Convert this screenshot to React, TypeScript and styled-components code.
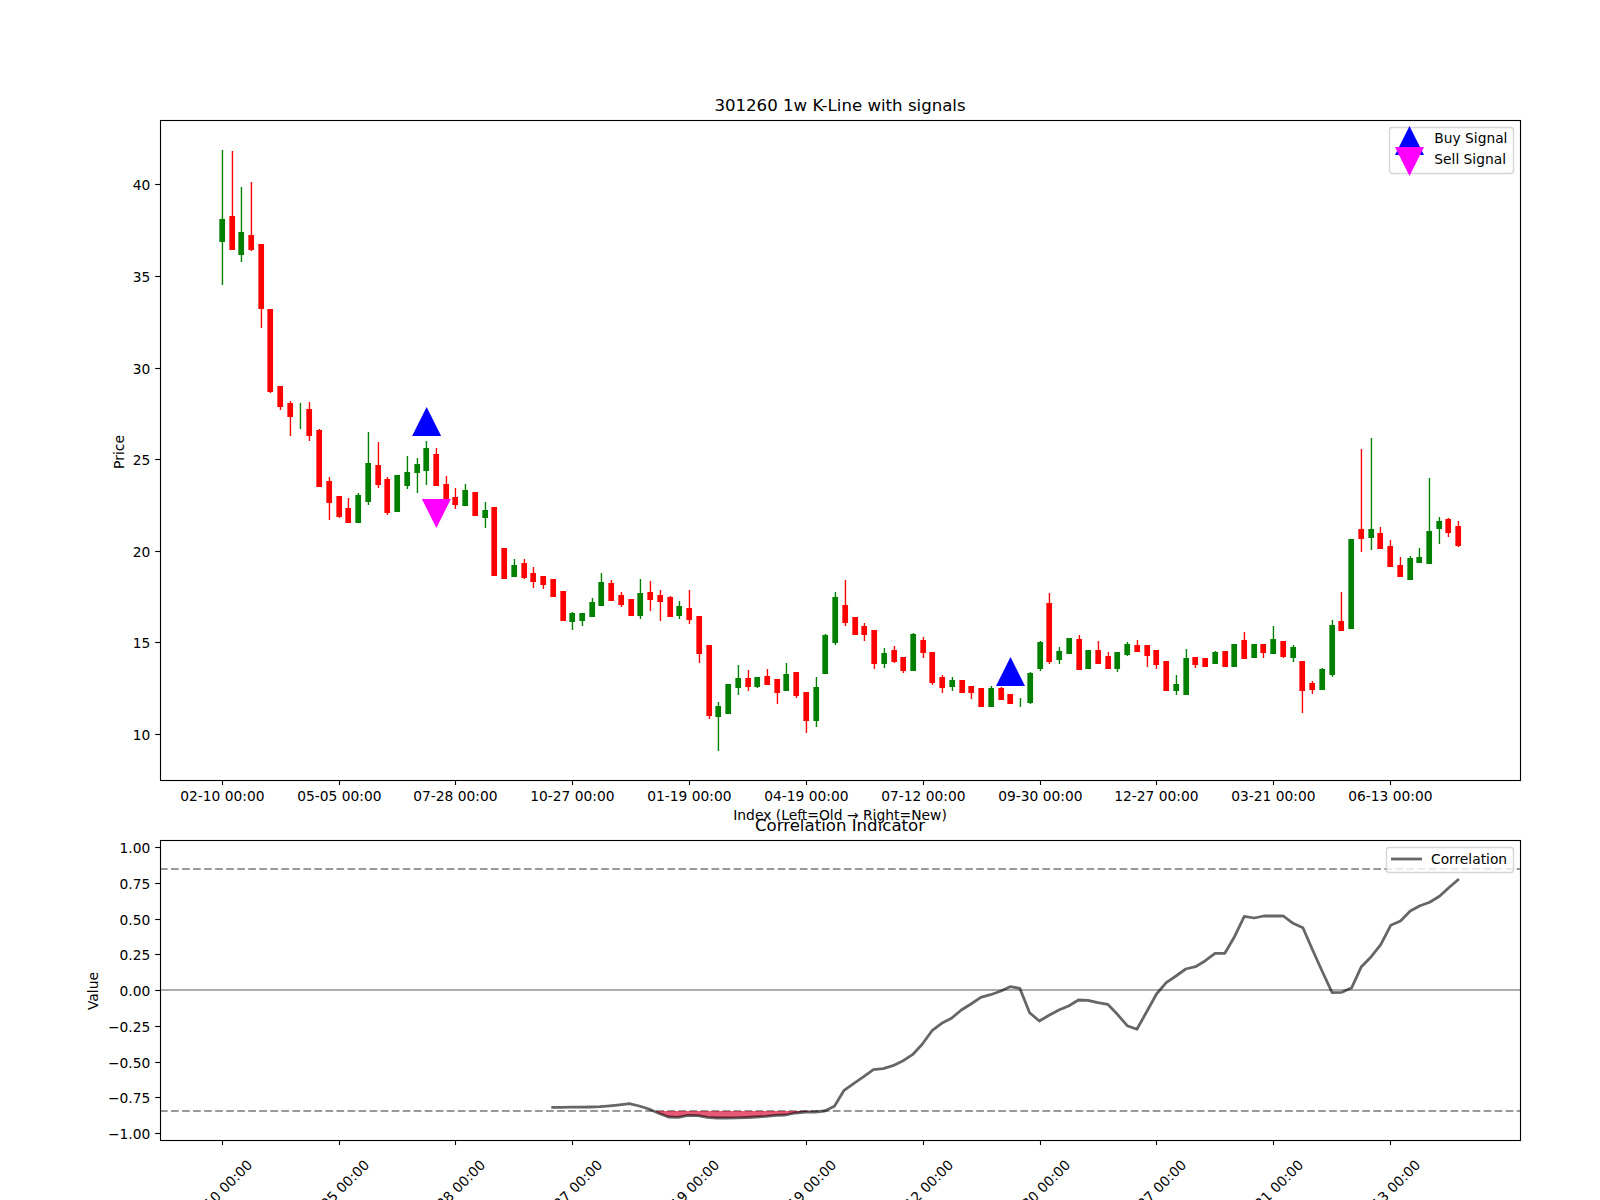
import React from "react";
import styled, { createGlobalStyle } from "styled-components";

const Global = createGlobalStyle`
  html, body { margin: 0; padding: 0; background: #fff; overflow: hidden; }
`;

const Page = styled.main`
  width: 1600px;
  height: 1200px;
  overflow: hidden;
  display: flex;
  flex-direction: column;
  background: #fff;
  font-family: "DejaVu Sans", sans-serif;
  color: #000;
`;

const Panel = styled.section<{ $top: number }>`
  display: flex;
  flex-direction: column;
  padding-top: ${(p) => p.$top}px;
`;

const ChartTitle = styled.h2`
  margin: 0;
  width: 1680px;
  text-align: center;
  font-size: 16.6px;
  line-height: 20px;
  font-weight: 400;
  white-space: nowrap;
`;

const Plot = styled.svg`
  display: block;
  overflow: visible;
  flex: none;
`;

const Spine = styled.rect`
  fill: none;
  stroke: #000;
  stroke-width: 1.11;
`;
const Tick = styled.line`
  stroke: #000;
  stroke-width: 1.11;
`;
const TickLabel = styled.text<{ $anchor: string }>`
  font-family: "DejaVu Sans", sans-serif;
  font-size: 13.8px;
  fill: #000;
  text-anchor: ${(p) => p.$anchor};
`;
const AxisLabel = styled.text`
  font-family: "DejaVu Sans", sans-serif;
  font-size: 13.89px;
  fill: #000;
  text-anchor: middle;
`;
const Wick = styled.line<{ $color: string }>`
  stroke: ${(p) => p.$color};
  stroke-width: 1.39;
`;
const Body = styled.rect<{ $color: string }>`
  fill: ${(p) => p.$color};
`;
const Marker = styled.polygon<{ $color: string }>`
  fill: ${(p) => p.$color};
`;
const LegendBox = styled.rect`
  fill: #fff;
  fill-opacity: 0.8;
  stroke: #ccc;
  stroke-opacity: 0.8;
  stroke-width: 1.39;
`;
const ThresholdLine = styled.line`
  stroke: #808080;
  stroke-opacity: 0.8;
  stroke-width: 2.08;
  stroke-dasharray: 7.7 3.33;
`;
const ZeroLine = styled.line`
  stroke: #808080;
  stroke-opacity: 0.65;
  stroke-width: 2.08;
`;
const CorrelationLine = styled.polyline`
  fill: none;
  stroke: #000;
  stroke-opacity: 0.6;
  stroke-width: 2.78;
  stroke-linejoin: round;
`;
const LegendSwatch = styled.line`
  stroke: #000;
  stroke-opacity: 0.6;
  stroke-width: 2.78;
`;
const OversoldFill = styled.polygon`
  fill: #dc143c;
  fill-opacity: 0.7;
`;

type C = [number, "g" | "r", number, number, number, number];
// x pixel, colour, wick top, body top, body bottom, wick bottom
const candles: C[] = [
  [222,"g",150,219,242,285],[232,"r",151,216,250,250],[241,"g",187,232,255,262],[251,"r",182,235,250,251],
  [261,"r",244,244,309,328],[270,"r",309,309,392,393],[280,"r",386,386,407,410],[290,"r",401,403,417,436],
  [300,"g",403,416,416,429],[309,"r",402,409,436,441],[319,"r",429,430,487,487],[329,"r",477,481,503,520],
  [339,"r",496,496,517,518],[348,"r",498,508,523,523],[358,"g",493,495,523,523],[368,"g",432,463,502,505],
  [378,"r",442,465,485,488],[387,"r",477,479,513,515],[397,"g",475,475,512,512],[407,"g",456,472,486,489],
  [417,"g",458,464,473,493],[426,"g",441,448,471,485],[436,"r",448,454,486,486],[446,"r",476,484,501,502],
  [455,"r",488,497,505,509],[465,"g",484,490,506,506],[475,"r",492,492,516,516],[485,"g",502,510,518,528],
  [494,"r",507,507,576,576],[504,"r",548,548,579,579],[514,"g",559,565,577,577],[524,"r",559,563,578,579],
  [533,"r",567,573,582,588],[543,"r",576,576,585,589],[553,"r",579,579,597,597],[563,"r",591,591,621,621],
  [572,"g",612,613,622,630],[582,"g",613,613,621,626],[592,"g",598,602,617,617],[601,"g",573,582,606,606],
  [611,"r",580,583,601,601],[621,"r",592,595,605,607],[631,"r",599,599,616,616],[640,"g",579,593,616,619],
  [650,"r",581,592,600,611],[660,"r",590,595,602,621],[670,"r",596,597,617,617],[679,"g",601,606,616,619],
  [689,"r",590,608,620,624],[699,"r",616,616,654,663],[709,"r",645,645,716,719],[718,"g",702,706,717,751],
  [728,"g",684,684,714,714],[738,"g",665,678,688,695],[748,"r",670,678,687,691],[757,"g",677,677,687,688],
  [767,"r",669,676,685,685],[777,"r",679,679,693,704],[786,"g",663,674,691,691],[796,"r",672,672,696,698],
  [806,"r",692,692,721,733],[816,"g",677,687,721,727],[825,"g",634,635,674,674],[835,"g",592,597,643,645],
  [845,"r",580,605,623,626],[855,"r",617,617,635,635],[864,"r",623,626,635,641],[874,"r",630,630,664,669],
  [884,"g",648,653,664,668],[894,"r",646,650,662,663],[903,"r",657,657,671,673],[913,"g",633,634,671,671],
  [923,"r",637,640,653,658],[932,"r",652,652,683,685],[942,"r",675,677,688,693],[952,"g",677,680,687,691],
  [962,"r",680,680,693,693],[971,"r",686,686,693,699],[981,"r",688,688,707,707],[991,"g",686,688,707,707],
  [1001,"r",687,688,700,700],[1010,"r",694,694,704,704],[1020,"g",698,702,702,707],[1030,"g",672,673,703,704],
  [1040,"g",641,642,669,671],[1049,"r",593,603,662,664],[1059,"g",647,651,660,664],[1069,"g",638,638,654,654],
  [1079,"r",635,639,670,670],[1088,"g",650,650,669,669],[1098,"r",641,650,664,664],[1108,"r",652,656,669,669],
  [1117,"g",652,652,669,672],[1127,"g",642,644,655,656],[1137,"r",640,645,652,652],[1147,"r",645,645,656,667],
  [1156,"r",650,650,665,669],[1166,"r",661,661,691,691],[1176,"g",675,684,691,695],[1186,"g",649,658,695,695],
  [1195,"r",657,657,665,668],[1205,"r",658,658,667,667],[1215,"g",651,652,664,664],[1225,"r",651,651,667,667],
  [1234,"g",644,644,667,667],[1244,"r",632,640,659,659],[1254,"g",644,644,658,658],[1263,"r",644,644,653,658],
  [1273,"g",626,639,654,654],[1283,"r",641,641,657,658],[1293,"g",645,647,658,662],[1302,"r",661,661,691,713],
  [1312,"r",681,683,690,694],[1322,"g",668,669,690,690],[1332,"g",620,625,675,677],[1341,"r",592,621,631,631],
  [1351,"g",539,539,629,629],[1361,"r",449,529,539,552],[1371,"g",438,529,538,550],[1380,"r",527,533,549,549],
  [1390,"r",540,546,567,567],[1400,"r",557,565,577,577],[1410,"g",556,558,580,580],[1419,"g",548,557,563,563],
  [1429,"g",478,531,564,564],[1439,"g",517,521,529,544],[1448,"r",518,519,533,537],[1458,"r",521,526,546,547],
];

const colorOf = { g: "#008000", r: "#ff0000" };

const corr: number[] = [
  1107.3,1107.3,1107.2,1107.1,1107,1106.7,1105.8,1104.8,1103.7,1106,1109,1113.3,1117,1117.3,1115.3,1115.7,
  1117.3,1118,1118,1117.8,1117.5,1117,1116.3,1115.3,1115,1113,1112,1112,1111,1106.3,1090.3,1083.3,1076.7,1069.7,
  1068.7,1065.7,1061,1054.7,1044.3,1030.7,1023.3,1018.3,1010,1004,997.3,994.7,991.3,986.7,988.3,1012.7,1021,
  1015.3,1010,1006,1000,1000.3,1002.7,1004.3,1014.3,1025.7,1029.3,1011.7,994,982.7,976,969,966.7,960.7,953.3,
  953.3,936.7,916.3,918,916,916,916,923.3,927.7,950,971.7,992.7,992.3,987.7,966.7,956.7,944.3,925.3,921,911,
  905.7,902.3,896.3,887.3,879,
];
const corrX = (k: number) => 219.5 + 9.76 * (k + 34);
const corrPoints = corr.map((y, k) => `${corrX(k).toFixed(1)},${y}`).join(" ");
const fillPoints = [
  `${corrX(10.6).toFixed(1)},1111`,
  ...corr.slice(11, 26).map((y, k) => `${corrX(k + 11).toFixed(1)},${y}`),
  `${corrX(27).toFixed(1)},1111`,
].join(" ");

const xTicks: [number, string][] = [
  [222,"02-10 00:00"],[339,"05-05 00:00"],[455,"07-28 00:00"],[572,"10-27 00:00"],[689,"01-19 00:00"],
  [806,"04-19 00:00"],[923,"07-12 00:00"],[1040,"09-30 00:00"],[1156,"12-27 00:00"],[1273,"03-21 00:00"],[1390,"06-13 00:00"],
];
const priceTicks: [number, string][] = [[184,"40"],[276,"35"],[368,"30"],[459,"25"],[551,"20"],[642,"15"],[734,"10"]];
const valueTicks: [number, string][] = [
  [847,"1.00"],[883,"0.75"],[919,"0.50"],[954,"0.25"],[990,"0.00"],[1026,"\u22120.25"],[1062,"\u22120.50"],[1097,"\u22120.75"],[1133,"\u22121.00"],
];

const up = (cx: number, top: number) => `${cx - 14.5},${top + 29} ${cx + 14.5},${top + 29} ${cx},${top}`;
const down = (cx: number, top: number) => `${cx - 14.5},${top} ${cx + 14.5},${top} ${cx},${top + 29}`;

const YAxis = ({ ticks }: { ticks: [number, string][] }) => (
  <>
    {ticks.map(([y, t]) => (
      <g key={t}>
        <Tick x1={155.2} x2={160} y1={y + 0.5} y2={y + 0.5} />
        <TickLabel $anchor="end" x={150.3} y={y + 5.5}>{t}</TickLabel>
      </g>
    ))}
  </>
);

const PriceChart = () => (
  <Plot width={1600} height={696} viewBox="0 116 1600 696">
    {candles.map(([x, c, wt, bt, bb, wb]) => (
      <g key={x}>
        <Wick $color={colorOf[c]} x1={x + 0.45} x2={x + 0.45} y1={wt} y2={wb} />
        {bb > bt && <Body $color={colorOf[c]} x={x - 2.65} y={bt} width={5.7} height={bb - bt} />}
      </g>
    ))}
    <Marker $color="#0000ff" points={up(426.6, 407)} />
    <Marker $color="#0000ff" points={up(1010.5, 657)} />
    <Marker $color="#ff00ff" points={down(436.4, 499)} />
    <Spine x={160.5} y={120.5} width={1360} height={660} />
    {xTicks.map(([x, t]) => (
      <g key={t}>
        <Tick x1={x + 0.5} x2={x + 0.5} y1={780} y2={785} />
        <TickLabel $anchor="middle" x={x + 0.4} y={801}>{t}</TickLabel>
      </g>
    ))}
    <YAxis ticks={priceTicks} />
    <AxisLabel x={840} y={820}>Index (Left=Old → Right=New)</AxisLabel>
    <AxisLabel transform="translate(124 452) rotate(-90)">Price</AxisLabel>
    <LegendBox x={1389.5} y={127.5} width={124} height={46} rx={2.8} />
    <Marker $color="#0000ff" points={up(1409.5, 126)} />
    <Marker $color="#ff00ff" points={down(1409.5, 147)} />
    <TickLabel $anchor="start" x={1434.3} y={143}>Buy Signal</TickLabel>
    <TickLabel $anchor="start" x={1434.3} y={164}>Sell Signal</TickLabel>
  </Plot>
);

const CorrelationChart = () => (
  <Plot width={1600} height={364} viewBox="0 836 1600 364">
    <ThresholdLine x1={160} x2={1520} y1={869} y2={869} />
    <ThresholdLine x1={160} x2={1520} y1={1111} y2={1111} />
    <ZeroLine x1={160} x2={1520} y1={990} y2={990} />
    <OversoldFill points={fillPoints} />
    <CorrelationLine points={corrPoints} />
    <Spine x={160.5} y={840.5} width={1360} height={300} />
    {xTicks.map(([x, t]) => (
      <g key={t}>
        <Tick x1={x + 0.5} x2={x + 0.5} y1={1140} y2={1145} />
        <TickLabel $anchor="middle" transform={`translate(${x - 2.2} 1192) rotate(-45)`} y={5}>{t}</TickLabel>
      </g>
    ))}
    <YAxis ticks={valueTicks} />
    <AxisLabel transform="translate(98 991) rotate(-90)">Value</AxisLabel>
    <LegendBox x={1386.5} y={847.5} width={127} height={25} rx={2.8} />
    <LegendSwatch x1={1391} x2={1422} y1={859} y2={859} />
    <TickLabel $anchor="start" x={1431} y={864}>Correlation</TickLabel>
  </Plot>
);

export default function App() {
  return (
    <Page>
      <Global />
      <Panel $top={96}>
        <ChartTitle>301260 1w K-Line with signals</ChartTitle>
        <PriceChart />
      </Panel>
      <Panel $top={4}>
        <ChartTitle>Correlation Indicator</ChartTitle>
        <CorrelationChart />
      </Panel>
    </Page>
  );
}
